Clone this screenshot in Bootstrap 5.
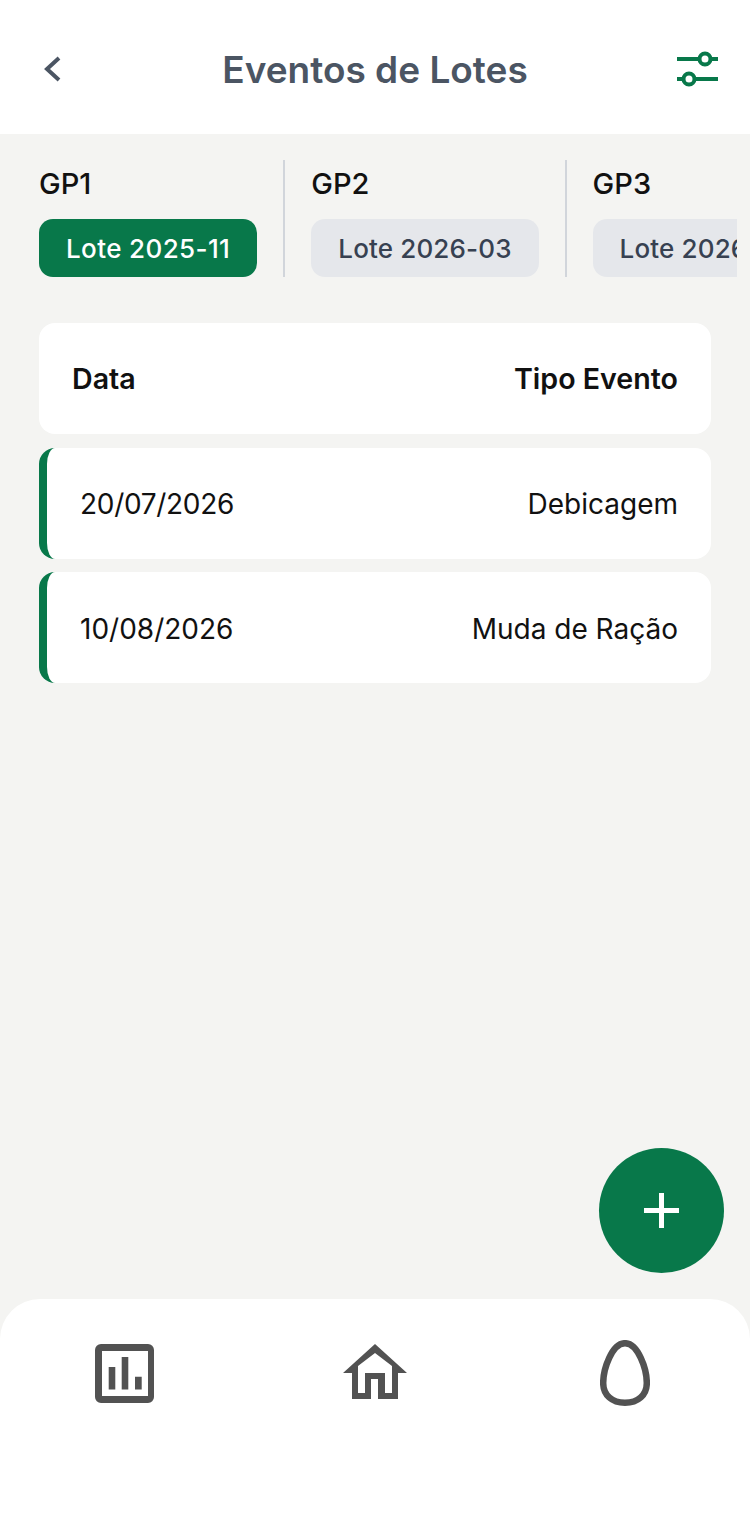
<!DOCTYPE html>
<html lang="pt-BR">

<head>
    <meta charset="UTF-8">
    <meta name="viewport" content="width=device-width, initial-scale=1.0">
    <title>Eventos de Lotes</title>
    <link rel="stylesheet" href="https://cdn.jsdelivr.net/npm/bootstrap@5.3.0/dist/css/bootstrap.min.css">
    <script src="https://cdn.jsdelivr.net/npm/bootstrap@5.3.0/dist/js/bootstrap.bundle.min.js"></script>
    <style>
        body {
            font-family: Inter, "Liberation Sans", sans-serif;
            background: #f4f4f2;
            color: #111;
        }

        .app-screen {
            position: relative;
            height: 1519px;
            overflow: hidden;
        }

        /* header */
        .top-bar {
            height: 134px;
            padding: 4px 32px 0 43px;
        }

        .top-title {
            font-size: 37px;
            font-weight: 600;
            color: #4b5563;
            margin: 0;
            padding-top: 2px;
        }

        .back-icon { width: 18px; height: 26px; margin-right: 12px; }
        .filter-icon { width: 41px; height: 38px; }

        /* lot tabs */
        .tabs-strip {
            margin: 26px 13px 0 39px;
            overflow: hidden;
        }

        .lot-group {
            flex: 0 0 auto;
            padding-right: 26px;
            margin-right: 26px;
            border-right: 2px solid #d1d5db;
            height: 117px;
        }

        .lot-group:last-child { border-right: 0; }

        .group-name {
            font-size: 29px;
            font-weight: 500;
            line-height: 48px;
            margin-bottom: 11px;
        }

        .lot-chip {
            height: 58px;
            padding: 0 27px;
            border-radius: 14px;
            font-size: 26px;
            font-weight: 500;
            line-height: 60px;
            white-space: nowrap;
            background: #e5e7eb;
            color: #374151;
            letter-spacing: 0.15px;
        }

        .lot-chip.chip-active {
            background: #08784a;
            color: #fff;
            letter-spacing: 0.38px;
        }

        /* events */
        .events-list {
            margin: 46px 39px 0;
            gap: 13.5px;
        }

        .event-card {
            height: 111px;
            flex: 0 0 auto;
            border: 0;
            border-radius: 16px;
            padding: 2px 33px 0;
            font-size: 28px;
        }

        .event-head { font-weight: 600; font-size: 28.6px; }

        .event-row {
            border-left: 8px solid #08784a;
            padding-left: 33px;
        }

        .date-tight { letter-spacing: -0.3px; }

        /* floating button */
        .fab-add {
            position: absolute;
            right: 26px;
            bottom: 246px;
            width: 125px;
            height: 125px;
            border: 0;
            background: #08784a;
        }

        .fab-add svg { width: 35px; height: 35px; }

        /* bottom nav */
        .bottom-nav {
            height: 220px;
            background: #fff;
            border-radius: 40px 40px 0 0;
            padding-top: 40px;
        }

        .nav-slot { flex: 1 1 0; height: 70px; }
    </style>
</head>

<body>
    <div class="app-screen d-flex flex-column">

        <header class="top-bar bg-white d-flex align-items-center justify-content-between">
            <svg class="back-icon" viewBox="0 0 18 26" fill="none" stroke="#4b5563" stroke-width="4">
                <path d="M16 2 L4 13 L16 24" />
            </svg>
            <h1 class="top-title">Eventos de Lotes</h1>
            <svg class="filter-icon" viewBox="0 0 41 38" fill="none" stroke="#08784a" stroke-width="4">
                <path d="M0 9H22.5M33.5 9H41M0 29H6.5M17.5 29H41" />
                <circle cx="28" cy="9" r="5.5" />
                <circle cx="12" cy="29" r="5.5" />
            </svg>
        </header>

        <div class="tabs-strip d-flex">
            <div class="lot-group">
                <div class="group-name">GP1</div>
                <div class="lot-chip chip-active">Lote 2025-11</div>
            </div>
            <div class="lot-group">
                <div class="group-name">GP2</div>
                <div class="lot-chip">Lote 2026-03</div>
            </div>
            <div class="lot-group">
                <div class="group-name">GP3</div>
                <div class="lot-chip">Lote 2026-07</div>
            </div>
        </div>

        <div class="events-list d-flex flex-column flex-grow-1">
            <div class="card event-card event-head flex-row align-items-center justify-content-between">
                <span>Data</span>
                <span>Tipo Evento</span>
            </div>
            <div class="card event-card event-row flex-row align-items-center justify-content-between">
                <span class="date-tight">20/07/2026</span>
                <span>Debicagem</span>
            </div>
            <div class="card event-card event-row flex-row align-items-center justify-content-between">
                <span>10/08/2026</span>
                <span>Muda de Ração</span>
            </div>
        </div>

        <button class="fab-add btn rounded-circle d-flex align-items-center justify-content-center p-0" type="button">
            <svg viewBox="0 0 35 35" fill="none" stroke="#fff" stroke-width="5">
                <path d="M17.5 0V35M0 17.5H35" />
            </svg>
        </button>

        <nav class="bottom-nav d-flex">
            <div class="nav-slot d-flex align-items-center justify-content-center">
                <svg width="60" height="60" viewBox="0 0 60 60">
                    <path fill="#525252" fill-rule="evenodd"
                        d="M6 0H53A6 6 0 0 1 59 6V53A6 6 0 0 1 53 59H6A6 6 0 0 1 0 53V6A6 6 0 0 1 6 0ZM7 7V52H53V7Z" />
                    <path fill="#525252" d="M13.7 23h6.6v22.5h-6.6zM26.7 13h6.6v32.5h-6.6zM40 32.7h6.7v12.8H40z" />
                </svg>
            </div>
            <div class="nav-slot d-flex align-items-center justify-content-center">
                <svg width="64" height="62" viewBox="0 0 64 62">
                    <path fill="#525252" fill-rule="evenodd"
                        d="M32 1L64 30H55V56H35V36H28V56H9V30H0ZM32 10L15 23V50H22V30H42V50H49V23Z" />
                </svg>
            </div>
            <div class="nav-slot d-flex align-items-center justify-content-center">
                <svg width="50" height="68" viewBox="0 0 50 68" fill="none">
                    <path d="M25 3.2C12 3.2 3.2 29 3.2 43C3.2 55 12 62.8 25 62.8C38 62.8 46.8 55 46.8 43C46.8 29 38 3.2 25 3.2Z"
                        stroke="#525252" stroke-width="6.5" />
                </svg>
            </div>
        </nav>
    </div>
</body>

</html>
